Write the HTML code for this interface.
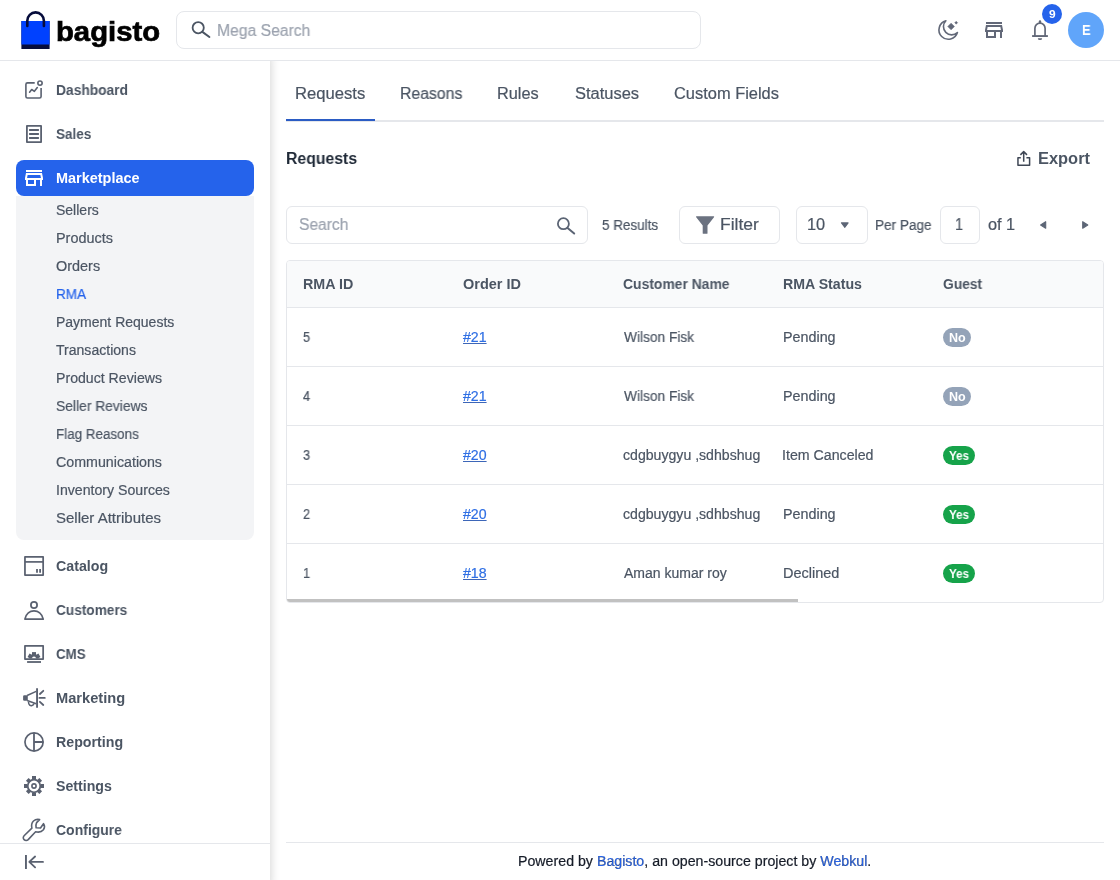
<!DOCTYPE html>
<html>
<head>
<meta charset="utf-8">
<title>Requests</title>
<style>
*{box-sizing:border-box;margin:0;padding:0}
html,body{width:1120px;height:880px;overflow:hidden;background:#fff}
body{font-family:"Liberation Sans",sans-serif;color:#4b5563;position:relative}
.a{position:absolute}
.t{position:absolute;line-height:20px;white-space:nowrap;transform-origin:0 50%;will-change:transform}
.box{position:absolute;border:1px solid #e5e7eb;border-radius:6px;background:#fff}
.ln{position:absolute;background:#e5e7eb}
svg{position:absolute;overflow:visible}
</style>
</head>
<body>
<!-- sidebar bg -->
<div class="a" style="left:0;top:47px;width:270px;height:833px;background:#fff;box-shadow:0 8px 10px 0 rgba(0,0,0,.2)"></div>
<div class="a" style="left:0;top:30px;width:300px;height:30px;background:#fff"></div>
<!-- header -->
<div class="ln" style="left:0;top:60px;width:1120px;height:1px"></div>
<svg style="left:20px;top:10px" width="31" height="40" viewBox="0 0 31 40">
  <rect x="1.4" y="11" width="28.2" height="28" fill="#060c3b"/>
  <rect x="1.4" y="11" width="28.2" height="23.5" fill="#0041ff"/>
  <path d="M7.3 16 V10.7 a8.3 8.3 0 0 1 16.6 0 V16" fill="none" stroke="#060c3b" stroke-width="2.6" stroke-linecap="round"/>
</svg>
<div class="box" style="left:176px;top:11px;width:525px;height:38px;border-radius:8px"></div>
<svg style="left:190px;top:20px" width="22" height="20" viewBox="0 0 22 20">
  <circle cx="8.2" cy="7.7" r="5.6" fill="none" stroke="#4b5563" stroke-width="1.8"/>
  <path d="M12.4 11.9 L19.4 17" stroke="#4b5563" stroke-width="2" stroke-linecap="round"/>
</svg>

<!-- header right icons -->
<div class="a" style="left:1042px;top:4px;width:20px;height:20px;border-radius:10px;background:#2563eb"></div>
<div class="a" style="left:1068px;top:12px;width:36px;height:36px;border-radius:18px;background:#60a5fa"></div>

<!-- sidebar -->
<div class="ln" style="left:0;top:60px;width:290px;height:1px"></div>
<div class="a" style="left:16px;top:196px;width:238px;height:344px;background:#f3f4f6;border-radius:0 0 8px 8px"></div>
<div class="a" style="left:16px;top:160px;width:238px;height:36px;border-radius:8px;background:#2563eb"></div>
<div class="ln" style="left:0;top:843px;width:270px;height:1px"></div>


<!-- tabs -->
<div class="ln" style="left:286px;top:120px;width:818px;height:2px"></div>
<div class="a" style="left:286px;top:119px;width:89px;height:2px;background:#2b5cc4"></div>

<!-- toolbar -->
<div class="box" style="left:286px;top:206px;width:302px;height:38px"></div>
<svg style="left:555px;top:216px" width="22" height="20" viewBox="0 0 22 20">
  <circle cx="8.4" cy="7.7" r="5.5" fill="none" stroke="#5b6474" stroke-width="1.8"/>
  <path d="M12.6 11.9 L19.2 17.5" stroke="#5b6474" stroke-width="2" stroke-linecap="round"/>
</svg>
<div class="box" style="left:679px;top:206px;width:101px;height:38px"></div>
<svg style="left:695.6px;top:216px" width="19" height="18" viewBox="0 0 19 18">
  <path d="M0.6 0.3 H17.6 Q18.6 0.3 18 1.2 L11.5 9.4 V17.2 Q11.5 17.8 10.8 17.8 H7.4 Q6.7 17.8 6.7 17.2 V9.4 L0.2 1.2 Q-0.4 0.3 0.6 0.3 Z" fill="#6b7280"/>
</svg>
<div class="box" style="left:796px;top:206px;width:72px;height:38px"></div>
<div class="box" style="left:940px;top:206px;width:40px;height:38px"></div>

<!-- table -->
<div class="a" style="left:286px;top:260px;width:818px;height:343px;border:1px solid #e5e7eb;border-radius:4px;overflow:hidden;background:#fff">
  <div class="a" style="left:0;top:0;width:816px;height:46px;background:#f9fafb"></div>
  <div class="ln" style="left:0;top:46px;width:816px;height:1px"></div>
  <div class="ln" style="left:0;top:105px;width:816px;height:1px"></div>
  <div class="ln" style="left:0;top:164px;width:816px;height:1px"></div>
  <div class="ln" style="left:0;top:223px;width:816px;height:1px"></div>
  <div class="ln" style="left:0;top:282px;width:816px;height:1px"></div>
  <div class="a" style="left:0;top:338px;width:511px;height:4px;background:#c1c1c1"></div>
</div>
<div class="a" style="left:943px;top:328px;width:28px;height:19px;border-radius:10px;background:#94a3b8"></div>
<div class="a" style="left:943px;top:387px;width:28px;height:19px;border-radius:10px;background:#94a3b8"></div>
<div class="a" style="left:943px;top:446px;width:32px;height:19px;border-radius:10px;background:#16a34a"></div>
<div class="a" style="left:943px;top:505px;width:32px;height:19px;border-radius:10px;background:#16a34a"></div>
<div class="a" style="left:943px;top:564px;width:32px;height:19px;border-radius:10px;background:#16a34a"></div>

<!-- footer -->
<div class="ln" style="left:286px;top:842px;width:818px;height:1px"></div>

<svg style="left:0;top:0" width="1120" height="880" viewBox="0 0 1120 880" fill="none" stroke-linejoin="round">
<g stroke="#5a6170" stroke-width="1.6">
  <!-- dashboard -->
  <path d="M34.7 82.9 H27.5 Q25.9 82.9 25.9 84.500 V96.4 Q25.9 98 27.5 98 H39.5 Q41.1 98 41.1 96.4 V88"/>
  <circle cx="40" cy="83.1" r="2.15"/>
  <path d="M29.6 92.2 L31.700 89.500 L34.4 91.3 L37.3 87.6" stroke-linecap="round"/>
  <!-- sales -->
  <rect x="26.9" y="125.9" width="14.2" height="16.2" stroke-width="1.8"/>
  <path d="M29.1 130 H38.9 M29.1 134 H38.9 M29.1 138 H38.9" stroke-width="1.8"/>
  <!-- catalog -->
  <rect x="24.95" y="556.9" width="18.2" height="18.1" stroke-width="1.75"/>
  <path d="M25 561.9 H43" stroke-width="1.7"/>
  <path d="M37 569.100 V572.7 M40.1 569.100 V572.7" stroke-width="1.8"/>
  <!-- customers -->
  <circle cx="34" cy="604.9" r="3.1" stroke-width="1.75"/>
  <path d="M24.9 619.1 C26 613.5 30 610.800 34 610.800 C38 610.800 42 613.5 43.2 619.1 Z" stroke-width="1.75"/>
  <!-- cms -->
  <rect x="24.95" y="645.8" width="18.2" height="13.3" stroke-width="1.75"/>
  <path d="M27.1 662 H41" stroke-width="1.8"/>
  <!-- marketing -->
  <path d="M37.05 688.2 V707.8" stroke-width="1.9"/>
  <path d="M27.1 695.5 L36.2 691.4 M27.1 700.5 L36.2 703.8" stroke-width="1.5"/>
  <path d="M28.5 702 C28.5 705 30.500 706 32 705.500 C33.2 705.1 33.9 704.3 34.1 703.3" stroke-width="1.5"/>
  <path d="M39.900 694 L43.300 690.800 M39.400 697.9 H44.800 M39.900 701.800 L43.300 705" stroke-width="1.8" stroke-linecap="round"/>
  <!-- reporting -->
  <circle cx="34.05" cy="742" r="9.1" stroke-width="1.7"/>
  <path d="M34 733 V751 M34 742 H43" stroke-width="1.8"/>
  <!-- settings -->
  <circle cx="34" cy="786" r="6.3" stroke-width="1.8"/>
  <circle cx="34" cy="786" r="2.1" stroke-width="1.6"/>
  <!-- configure -->
  <path d="M24.1 835.7 L31.900 828.100 C31.300 825.600 31.600 822.900 33.500 821 C35.300 819.400 37.500 819.100 39.600 819.600 L36.600 822.600 C35.800 824.300 35.700 826 36.100 827.800 L40.500 828 L43.500 823.700 C44.700 825.500 44.700 828 43.400 829.800 C41.700 831.900 38.500 832.500 35.600 831.800 L28.200 839.600 C27 840.800 25.300 840.800 24.100 839.600 C23 838.500 23 836.800 24.100 835.700 Z" stroke-width="1.6"/>
  <!-- collapse -->
  <path d="M25.95 855 V868.9" stroke-width="1.9"/>
  <path d="M43 861.9 H29.600 M35.100 856.500 L29.300 861.900 L35.100 867.400" stroke-width="1.8" stroke-linecap="round"/>
</g>
<!-- filled bits of sidebar icons -->
<g fill="#5a6170" stroke="none">
  <rect x="23.1" y="695.3" width="4.7" height="5.4" rx="1.2"/>
  <g transform="translate(34 786)">
    <rect x="-2" y="-10" width="4" height="3.400"/><rect x="-2" y="6.600" width="4" height="3.400"/>
    <rect x="-10" y="-2" width="3.400" height="4"/><rect x="6.600" y="-2" width="3.400" height="4"/>
    <g transform="rotate(45)"><rect x="-1.900" y="-9.500" width="3.800" height="3"/><rect x="-1.900" y="6.500" width="3.800" height="3"/>
    <rect x="-9.500" y="-1.900" width="3" height="3.800"/><rect x="6.500" y="-1.900" width="3" height="3.800"/></g>
  </g>
  <!-- cms half gear -->
  <g transform="translate(34 658.4)">
    <path d="M-4.500 0 A4.500 4.500 0 0 1 4.500 0 H2 A2 2 0 0 0 -2 0 Z"/>
    <rect x="-2" y="-6.300" width="4" height="3"/>
    <rect x="-2" y="-6.300" width="4" height="3" transform="rotate(60)"/>
    <rect x="-2" y="-6.300" width="4" height="3" transform="rotate(-60)"/>
  </g>
</g>
<!-- marketplace (white, material store) -->
<path transform="translate(22 166)" fill="#fff" d="M18.36 9l.6 3H5.040l.6-3h12.72M20 4H4v2h16V4zm0 3H4l-1 5v2h1v6h10v-6h4v6h2v-6h1v-2l-1-5zM6 18v-4h6v4H6z"/>
<!-- header store -->
<path transform="translate(982 18)" fill="#626878" d="M18.36 9l.6 3H5.040l.6-3h12.72M20 4H4v2h16V4zm0 3H4l-1 5v2h1v6h10v-6h4v6h2v-6h1v-2l-1-5zM6 18v-4h6v4H6z"/>
<!-- moon -->
<g stroke="#626878" stroke-width="1.6" stroke-linecap="round">
  <path d="M945.900 20.800 A9.400 9.400 0 1 0 957.400 32.500 A8.200 8.200 0 0 1 945.900 20.800 Z"/>
</g>
<path d="M951.1 23.2 L954.4 26.500 L951.1 29.800 L947.800 26.500 Z" fill="#626878" stroke="#626878" stroke-width=".6"/>
<path d="M956.2 21.200 L957.700 22.700 L956.2 24.200 L954.700 22.700 Z" fill="#626878" stroke="#626878" stroke-width=".4"/>
<!-- bell -->
<g stroke="#626878">
  <path d="M1034.900 36 V28.200 A5.100 5.100 0 0 1 1045.100 28.200 V36" stroke-width="1.700"/>
  <path d="M1032.100 36.050 H1047.900" stroke-width="1.900"/>
</g>
<path d="M1038.800 23 V21.400 A1.200 1.200 0 0 1 1041.200 21.400 V23 Z" fill="#626878"/>
<path d="M1037.800 38.200 H1042.200 A2.200 1.900 0 0 1 1037.800 38.200 Z" fill="#626878"/>
<!-- export -->
<g stroke="#3f4755" stroke-width="1.500">
  <path d="M1020.800 157.800 H1017.950 V165.200 H1029.600 V157.800 H1026.400"/>
  <path d="M1023.700 161.700 V151.800 M1020.400 154.900 L1023.700 151.600 L1027 154.900"/>
</g>
<!-- arrows -->
<g fill="#5d6676" stroke="#5d6676" stroke-linejoin="round">
  <path d="M841.600 222.900 H848 L844.800 227.200 Z" stroke-width="1.400"/>
  <path d="M1045.700 221.700 V228.300 L1040.600 225 Z" stroke-width="1.100"/>
  <path d="M1082.700 221.700 V228.300 L1087.800 225 Z" stroke-width="1.100"/>
</g>
</svg>

<div class="t" style="left:56.08px;top:80px;font-size:14px;font-weight:bold;color:#4b5563;transform:scaleX(0.9856)">Dashboard</div>
<div class="t" style="left:56.21px;top:124px;font-size:14px;font-weight:bold;color:#4b5563;transform:scaleX(0.9659)">Sales</div>
<div class="t" style="left:56.04px;top:168px;font-size:14px;font-weight:bold;color:#ffffff;transform:scaleX(1.0324)">Marketplace</div>
<div class="t" style="left:56.02px;top:556px;font-size:14px;font-weight:bold;color:#4b5563;transform:scaleX(1.0155)">Catalog</div>
<div class="t" style="left:56.04px;top:600px;font-size:14px;font-weight:bold;color:#4b5563;transform:scaleX(0.9752)">Customers</div>
<div class="t" style="left:56.05px;top:644px;font-size:14px;font-weight:bold;color:#4b5563;transform:scaleX(0.9537)">CMS</div>
<div class="t" style="left:56.03px;top:688px;font-size:14px;font-weight:bold;color:#4b5563;transform:scaleX(1.0458)">Marketing</div>
<div class="t" style="left:56.06px;top:732px;font-size:14px;font-weight:bold;color:#4b5563;transform:scaleX(1.0150)">Reporting</div>
<div class="t" style="left:56.20px;top:776px;font-size:14px;font-weight:bold;color:#4b5563;transform:scaleX(1.0119)">Settings</div>
<div class="t" style="left:56.03px;top:820px;font-size:14px;font-weight:bold;color:#4b5563;transform:scaleX(0.9977)">Configure</div>
<div class="t" style="left:55.87px;top:200px;font-size:14px;font-weight:normal;color:#4b5563;transform:scaleX(0.9986);-webkit-text-stroke:.2px #4b5563">Sellers</div>
<div class="t" style="left:55.72px;top:228px;font-size:14px;font-weight:normal;color:#4b5563;transform:scaleX(1.0299);-webkit-text-stroke:.2px #4b5563">Products</div>
<div class="t" style="left:55.82px;top:256px;font-size:14px;font-weight:normal;color:#4b5563;transform:scaleX(1.0307);-webkit-text-stroke:.2px #4b5563">Orders</div>
<div class="t" style="left:55.79px;top:284px;font-size:14px;font-weight:normal;color:#2563eb;transform:scaleX(0.9686);-webkit-text-stroke:.2px #2563eb">RMA</div>
<div class="t" style="left:55.75px;top:312px;font-size:14px;font-weight:normal;color:#4b5563;transform:scaleX(0.9997);-webkit-text-stroke:.2px #4b5563">Payment Requests</div>
<div class="t" style="left:55.99px;top:340px;font-size:14px;font-weight:normal;color:#4b5563;transform:scaleX(1.0036);-webkit-text-stroke:.2px #4b5563">Transactions</div>
<div class="t" style="left:55.74px;top:368px;font-size:14px;font-weight:normal;color:#4b5563;transform:scaleX(1.0093);-webkit-text-stroke:.2px #4b5563">Product Reviews</div>
<div class="t" style="left:55.88px;top:396px;font-size:14px;font-weight:normal;color:#4b5563;transform:scaleX(0.9885);-webkit-text-stroke:.2px #4b5563">Seller Reviews</div>
<div class="t" style="left:55.80px;top:424px;font-size:14px;font-weight:normal;color:#4b5563;transform:scaleX(0.9584);-webkit-text-stroke:.2px #4b5563">Flag Reasons</div>
<div class="t" style="left:55.78px;top:452px;font-size:14px;font-weight:normal;color:#4b5563;transform:scaleX(1.0165);-webkit-text-stroke:.2px #4b5563">Communications</div>
<div class="t" style="left:55.60px;top:480px;font-size:14px;font-weight:normal;color:#4b5563;transform:scaleX(1.0095);-webkit-text-stroke:.2px #4b5563">Inventory Sources</div>
<div class="t" style="left:55.83px;top:508px;font-size:14px;font-weight:normal;color:#4b5563;transform:scaleX(1.0705);-webkit-text-stroke:.2px #4b5563">Seller Attributes</div>
<div class="t" style="left:295.14px;top:84px;font-size:16px;font-weight:normal;color:#4b5563;transform:scaleX(1.0387);-webkit-text-stroke:.2px #4b5563">Requests</div>
<div class="t" style="left:399.95px;top:84px;font-size:16px;font-weight:normal;color:#4b5563;transform:scaleX(0.9875);-webkit-text-stroke:.2px #4b5563">Reasons</div>
<div class="t" style="left:497.41px;top:84px;font-size:16px;font-weight:normal;color:#4b5563;transform:scaleX(1.0188);-webkit-text-stroke:.2px #4b5563">Rules</div>
<div class="t" style="left:574.76px;top:84px;font-size:16px;font-weight:normal;color:#4b5563;transform:scaleX(1.0294);-webkit-text-stroke:.2px #4b5563">Statuses</div>
<div class="t" style="left:674.42px;top:84px;font-size:16px;font-weight:normal;color:#4b5563;transform:scaleX(1.0261);-webkit-text-stroke:.2px #4b5563">Custom Fields</div>
<div class="t" style="left:285.85px;top:149px;font-size:16px;font-weight:bold;color:#1f2937;transform:scaleX(0.9863)">Requests</div>
<div class="t" style="left:1037.71px;top:149px;font-size:16px;font-weight:bold;color:#4b5563;transform:scaleX(1.0260)">Export</div>
<div class="t" style="left:298.70px;top:215px;font-size:16px;font-weight:normal;color:#9ca3af;transform:scaleX(0.9746);-webkit-text-stroke:.2px #9ca3af">Search</div>
<div class="t" style="left:602.21px;top:215px;font-size:14px;font-weight:normal;color:#4b5563;transform:scaleX(0.9626);-webkit-text-stroke:.2px #4b5563">5 Results</div>
<div class="t" style="left:719.57px;top:215px;font-size:16px;font-weight:normal;color:#4b5563;transform:scaleX(1.0919);-webkit-text-stroke:.2px #4b5563">Filter</div>
<div class="t" style="left:806.56px;top:215px;font-size:16px;font-weight:normal;color:#4b5563;transform:scaleX(1.0213);-webkit-text-stroke:.2px #4b5563">10</div>
<div class="t" style="left:874.99px;top:215px;font-size:14px;font-weight:normal;color:#4b5563;transform:scaleX(0.9698);-webkit-text-stroke:.2px #4b5563">Per Page</div>
<div class="t" style="left:954.91px;top:215px;font-size:16px;font-weight:normal;color:#4b5563;transform:scaleX(0.8980);-webkit-text-stroke:.2px #4b5563">1</div>
<div class="t" style="left:987.62px;top:215px;font-size:16px;font-weight:normal;color:#4b5563;transform:scaleX(1.0179);-webkit-text-stroke:.2px #4b5563">of 1</div>
<div class="t" style="left:302.65px;top:274px;font-size:14px;font-weight:bold;color:#4b5563;transform:scaleX(1.0222)">RMA ID</div>
<div class="t" style="left:462.81px;top:274px;font-size:14px;font-weight:bold;color:#4b5563;transform:scaleX(1.0354)">Order ID</div>
<div class="t" style="left:623.03px;top:274px;font-size:14px;font-weight:bold;color:#4b5563;transform:scaleX(0.9923)">Customer Name</div>
<div class="t" style="left:782.76px;top:274px;font-size:14px;font-weight:bold;color:#4b5563;transform:scaleX(1.0113)">RMA Status</div>
<div class="t" style="left:943.04px;top:274px;font-size:14px;font-weight:bold;color:#4b5563;transform:scaleX(0.9837)">Guest</div>
<div class="t" style="left:303.24px;top:327px;font-size:14px;font-weight:normal;color:#4b5563;transform:scaleX(0.9100);-webkit-text-stroke:.2px #4b5563">5</div>
<div class="t" style="left:463.44px;top:327px;font-size:14px;font-weight:normal;color:#2f6fe4;transform:scaleX(1.0100);text-decoration:underline;text-decoration-color:#3d66b8;-webkit-text-stroke:.2px #2f6fe4">#21</div>
<div class="t" style="left:623.70px;top:327px;font-size:14px;font-weight:normal;color:#4b5563;transform:scaleX(0.9787);-webkit-text-stroke:.2px #4b5563">Wilson Fisk</div>
<div class="t" style="left:782.57px;top:327px;font-size:14px;font-weight:normal;color:#4b5563;transform:scaleX(1.0236);-webkit-text-stroke:.2px #4b5563">Pending</div>
<div class="t" style="left:949.07px;top:328px;font-size:12px;font-weight:bold;color:#fff;transform:scaleX(1.0455)">No</div>
<div class="t" style="left:303.46px;top:386px;font-size:14px;font-weight:normal;color:#4b5563;transform:scaleX(0.9100);-webkit-text-stroke:.2px #4b5563">4</div>
<div class="t" style="left:463.44px;top:386px;font-size:14px;font-weight:normal;color:#2f6fe4;transform:scaleX(1.0100);text-decoration:underline;text-decoration-color:#3d66b8;-webkit-text-stroke:.2px #2f6fe4">#21</div>
<div class="t" style="left:623.70px;top:386px;font-size:14px;font-weight:normal;color:#4b5563;transform:scaleX(0.9787);-webkit-text-stroke:.2px #4b5563">Wilson Fisk</div>
<div class="t" style="left:782.57px;top:386px;font-size:14px;font-weight:normal;color:#4b5563;transform:scaleX(1.0236);-webkit-text-stroke:.2px #4b5563">Pending</div>
<div class="t" style="left:949.07px;top:387px;font-size:12px;font-weight:bold;color:#fff;transform:scaleX(1.0455)">No</div>
<div class="t" style="left:303.27px;top:445px;font-size:14px;font-weight:normal;color:#4b5563;transform:scaleX(0.9100);-webkit-text-stroke:.2px #4b5563">3</div>
<div class="t" style="left:463.44px;top:445px;font-size:14px;font-weight:normal;color:#2f6fe4;transform:scaleX(1.0100);text-decoration:underline;text-decoration-color:#3d66b8;-webkit-text-stroke:.2px #2f6fe4">#20</div>
<div class="t" style="left:623.16px;top:445px;font-size:14px;font-weight:normal;color:#4b5563;transform:scaleX(1.0076);-webkit-text-stroke:.2px #4b5563">cdgbuygyu ,sdhbshug</div>
<div class="t" style="left:782.44px;top:445px;font-size:14px;font-weight:normal;color:#4b5563;transform:scaleX(1.0133);-webkit-text-stroke:.2px #4b5563">Item Canceled</div>
<div class="t" style="left:949.20px;top:446px;font-size:12px;font-weight:bold;color:#fff;transform:scaleX(0.9676)">Yes</div>
<div class="t" style="left:303.11px;top:504px;font-size:14px;font-weight:normal;color:#4b5563;transform:scaleX(0.9100);-webkit-text-stroke:.2px #4b5563">2</div>
<div class="t" style="left:463.44px;top:504px;font-size:14px;font-weight:normal;color:#2f6fe4;transform:scaleX(1.0100);text-decoration:underline;text-decoration-color:#3d66b8;-webkit-text-stroke:.2px #2f6fe4">#20</div>
<div class="t" style="left:623.16px;top:504px;font-size:14px;font-weight:normal;color:#4b5563;transform:scaleX(1.0076);-webkit-text-stroke:.2px #4b5563">cdgbuygyu ,sdhbshug</div>
<div class="t" style="left:782.57px;top:504px;font-size:14px;font-weight:normal;color:#4b5563;transform:scaleX(1.0236);-webkit-text-stroke:.2px #4b5563">Pending</div>
<div class="t" style="left:949.20px;top:505px;font-size:12px;font-weight:bold;color:#fff;transform:scaleX(0.9676)">Yes</div>
<div class="t" style="left:303.33px;top:563px;font-size:14px;font-weight:normal;color:#4b5563;transform:scaleX(0.9100);-webkit-text-stroke:.2px #4b5563">1</div>
<div class="t" style="left:463.44px;top:563px;font-size:14px;font-weight:normal;color:#2f6fe4;transform:scaleX(1.0100);text-decoration:underline;text-decoration-color:#3d66b8;-webkit-text-stroke:.2px #2f6fe4">#18</div>
<div class="t" style="left:623.73px;top:563px;font-size:14px;font-weight:normal;color:#4b5563;transform:scaleX(1.0009);-webkit-text-stroke:.2px #4b5563">Aman kumar roy</div>
<div class="t" style="left:782.56px;top:563px;font-size:14px;font-weight:normal;color:#4b5563;transform:scaleX(1.0347);-webkit-text-stroke:.2px #4b5563">Declined</div>
<div class="t" style="left:949.20px;top:564px;font-size:12px;font-weight:bold;color:#fff;transform:scaleX(0.9676)">Yes</div>
<div class="t" style="left:518.44px;top:851px;font-size:14px;font-weight:normal;color:#161c28;transform:scaleX(1.0140);-webkit-text-stroke:.2px #161c28">Powered by <span style="color:#2563eb">Bagisto</span>, an open-source project by <span style="color:#2563eb">Webkul</span>.</div>
<div class="t" style="left:55.88px;top:22px;font-size:27.7px;font-weight:bold;color:#000;transform:scaleX(1.0564);-webkit-text-stroke:0.7px #000">bagisto</div>
<div class="t" style="left:217.01px;top:21px;font-size:16px;font-weight:normal;color:#9ca3af;transform:scaleX(0.9804);-webkit-text-stroke:.2px #9ca3af">Mega Search</div>
<div class="t" style="left:1049.19px;top:5px;font-size:10px;font-weight:bold;color:#fff;transform:scaleX(1.1959)">9</div>
<div class="t" style="left:1081.84px;top:20px;font-size:14px;font-weight:bold;color:#fff;transform:scaleX(0.9286)">E</div>
</body>
</html>
